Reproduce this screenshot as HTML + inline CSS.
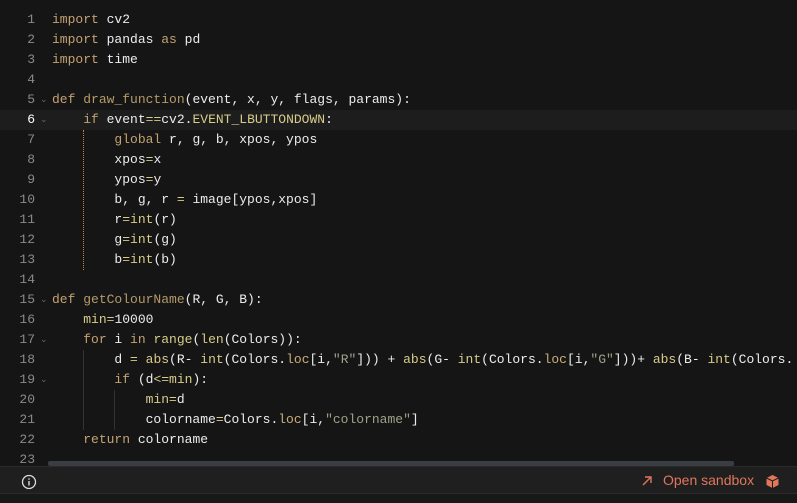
<!DOCTYPE html>
<html><head><style>
body{margin:0;width:797px;height:502px;background:#151515;overflow:hidden;font-family:"Liberation Mono",monospace;}
.ed{position:absolute;top:10px;left:0;width:797px;}
.l{position:relative;height:20px;line-height:20px;font-size:13px;white-space:pre;color:#ececec;}
.n{position:absolute;left:0;width:35px;text-align:right;color:#8a8a8a;}
.c{position:absolute;left:52px;}
.hl{background:#1d1d1d;}
.hl .n{color:#fff}
.f{position:absolute;left:40px;color:#666;font-size:9px;}
.k{color:#c4a272}.b{color:#d8cc8a}.s{color:#a0a08a}.fn{color:#b59a6a}.a{color:#c9ad7a}
.g{position:absolute;width:0;border-left:1px solid #333;}
.go{position:absolute;width:0;border-left:1px dotted #c48a40;}
.foot{position:absolute;left:0;top:466px;width:797px;height:26px;background:#1f1f1f;border-top:1px solid #2a2a2a;font-family:"Liberation Sans",sans-serif;}
.foot2{position:absolute;left:0;top:493px;width:797px;height:9px;background:#181818;border-top:1px solid #2a2a2a;}
</style></head><body>
<div class="ed">
<div class="l"><span class="n">1</span><span class="c"><span class="k">import</span> cv2</span></div>
<div class="l"><span class="n">2</span><span class="c"><span class="k">import</span> pandas <span class="k">as</span> pd</span></div>
<div class="l"><span class="n">3</span><span class="c"><span class="k">import</span> time</span></div>
<div class="l"><span class="n">4</span></div>
<div class="l"><span class="n">5</span><span class="f">⌄</span><span class="c"><span class="k">def</span> <span class="fn">draw_function</span>(event, x, y, flags, params):</span></div>
<div class="l hl"><span class="n">6</span><span class="f">⌄</span><span class="c">    <span class="k">if</span> event<span class="b">==</span>cv2.<span class="b">EVENT_LBUTTONDOWN</span>:</span></div>
<div class="l"><span class="n">7</span><span class="c">        <span class="k">global</span> r, g, b, xpos, ypos</span></div>
<div class="l"><span class="n">8</span><span class="c">        xpos<span class="b">=</span>x</span></div>
<div class="l"><span class="n">9</span><span class="c">        ypos<span class="b">=</span>y</span></div>
<div class="l"><span class="n">10</span><span class="c">        b, g, r <span class="b">=</span> image[ypos,xpos]</span></div>
<div class="l"><span class="n">11</span><span class="c">        r<span class="b">=int</span>(r)</span></div>
<div class="l"><span class="n">12</span><span class="c">        g<span class="b">=int</span>(g)</span></div>
<div class="l"><span class="n">13</span><span class="c">        b<span class="b">=int</span>(b)</span></div>
<div class="l"><span class="n">14</span></div>
<div class="l"><span class="n">15</span><span class="f">⌄</span><span class="c"><span class="k">def</span> <span class="fn">getColourName</span>(R, G, B):</span></div>
<div class="l"><span class="n">16</span><span class="c">    <span class="b">min=</span>10000</span></div>
<div class="l"><span class="n">17</span><span class="f">⌄</span><span class="c">    <span class="k">for</span> i <span class="k">in</span> <span class="b">range</span>(<span class="b">len</span>(Colors)):</span></div>
<div class="l"><span class="n">18</span><span class="c">        d <span class="b">=</span> <span class="b">abs</span>(R- <span class="b">int</span>(Colors.<span class="a">loc</span>[i,<span class="s">"R"</span>])) + <span class="b">abs</span>(G- <span class="b">int</span>(Colors.<span class="a">loc</span>[i,<span class="s">"G"</span>]))+ <span class="b">abs</span>(B- <span class="b">int</span>(Colors.</span></div>
<div class="l"><span class="n">19</span><span class="f">⌄</span><span class="c">        <span class="k">if</span> (d<span class="b">&lt;=min</span>):</span></div>
<div class="l"><span class="n">20</span><span class="c">            <span class="b">min=</span>d</span></div>
<div class="l"><span class="n">21</span><span class="c">            colorname<span class="b">=</span>Colors.<span class="a">loc</span>[i,<span class="s">"colorname"</span>]</span></div>
<div class="l"><span class="n">22</span><span class="c">    <span class="k">return</span> colorname</span></div>
<div class="l"><span class="n">23</span></div>
</div>
<div class="go" style="left:83px;top:130px;height:140px"></div>
<div class="g" style="left:83px;top:350px;height:80px"></div>
<div class="g" style="left:114px;top:390px;height:40px"></div>
<div style="position:absolute;left:48px;top:461px;width:686px;height:5px;background:#3a3d42;border-radius:2px"></div>
<div class="foot">
<svg style="position:absolute;left:21px;top:7px" width="16" height="16" viewBox="0 0 16 16"><circle cx="8" cy="8" r="6.5" fill="none" stroke="#ddd" stroke-width="1.3"/><rect x="7.3" y="7" width="1.4" height="4.5" fill="#ddd"/><rect x="7.3" y="4.3" width="1.4" height="1.4" fill="#ddd"/></svg>
<svg style="position:absolute;left:641px;top:8px" width="12" height="12" viewBox="0 0 12 12"><path d="M2 10 L10 2 M4 2 H10 V8" fill="none" stroke="#e0765c" stroke-width="1.4"/></svg>
<span style="position:absolute;left:663px;top:5px;font-size:14px;color:#e0765c">Open sandbox</span>
<svg style="position:absolute;left:765px;top:7px" width="15" height="15" viewBox="0 0 15 15"><path d="M7.5 1 L13.5 4 V11 L7.5 14 L1.5 11 V4 Z" fill="#e0765c"/><path d="M1.5 4 L7.5 7 L13.5 4 M7.5 7 V14" fill="none" stroke="#1a1a1a" stroke-width="1"/></svg>
</div>
<div class="foot2"></div>
</body></html>
